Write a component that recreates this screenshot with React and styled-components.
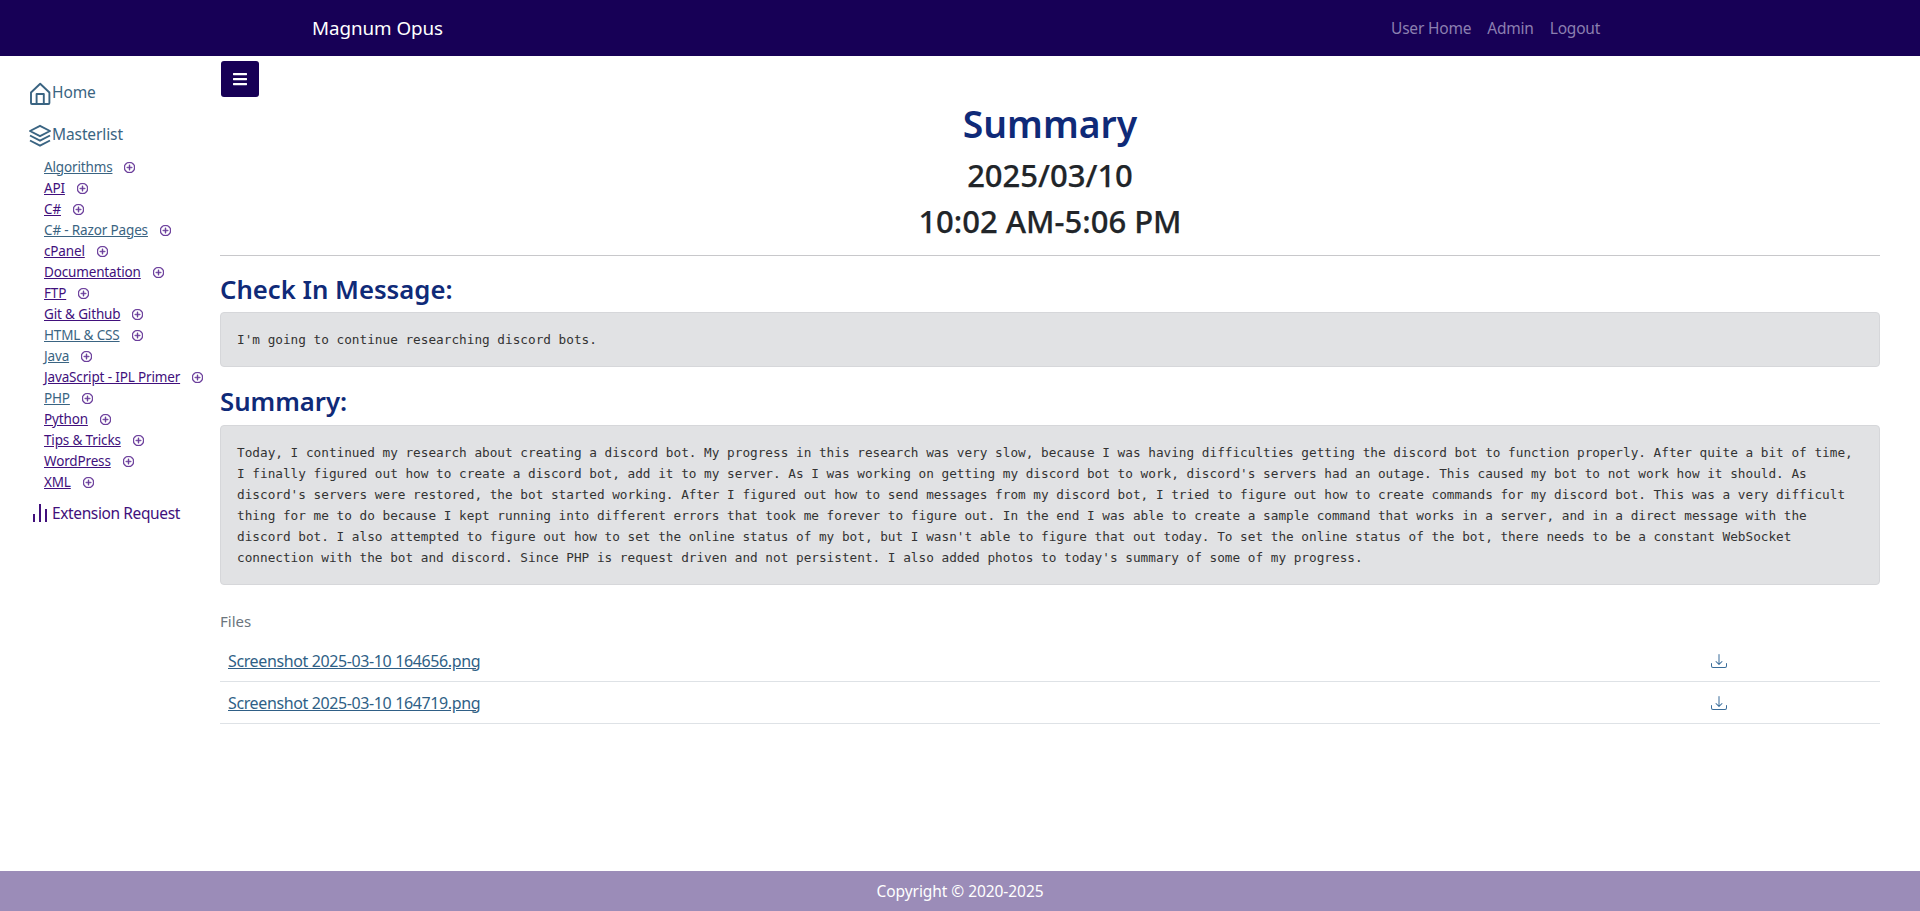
import React from "react";
import styled, { createGlobalStyle } from "styled-components";
import { BsPlusCircle, BsDownload } from "react-icons/bs";
import { FaBars } from "react-icons/fa";

const Global = createGlobalStyle`
  html, body { margin: 0; padding: 0; height: 100%; background: #fff; }
  body { font-family: "Noto Sans", "Open Sans", sans-serif; color: #212529; }
  #root { height: 100%; }
`;
const Page = styled.div`
  height: 911px; display: flex; flex-direction: column; overflow: hidden;
`;
const NavBar = styled.header`
  height: 56px; flex: none; background: #170056; display: flex; align-items: center;
  padding-left: 312px; box-sizing: border-box;
`;
const Brand = styled.div`
  color: #fff; font-size: 18.8px; width: 1079px; letter-spacing: -0.05px; line-height: 56px;
`;
const TopLinks = styled.nav`
  display: flex; gap: 16px;
`;
const TopLink = styled.a`
  color: #8b7fb0; font-size: 15.5px; letter-spacing: -0.2px;
`;
const Body = styled.div`
  flex: 1; display: flex; min-height: 0;
`;
const Side = styled.aside`
  width: 220px; flex: none; padding: 24px 0 0 29px; box-sizing: border-box;
`;
const MainItem = styled.div`
  display: flex; align-items: center; height: 24px; margin-bottom: ${p => p.$mb || 18}px;
  font-size: 15.5px; color: #3a6482; letter-spacing: -0.1px;
  svg { flex: none; width: 23px; height: 26px; }
`;
const SubList = styled.ul`
  list-style: none; margin: -6px 0 0; padding: 0 0 0 15px;
`;
const SubRow = styled.li`
  height: 21px; display: flex; align-items: center; white-space: nowrap;
`;
const SubLink = styled.a`
  font-size: 13.5px; text-decoration: underline; letter-spacing: -0.15px;
  color: ${p => (p.$seen ? "#3a6482" : "#41107c")};
`;
const PlusIcon = styled(BsPlusCircle)`
  width: 11px; height: 11px; margin-left: 12px; margin-top: 2px; color: #5b2a91; stroke: #5b2a91; stroke-width: 0.8px;
`;
const ExtItem = styled(MainItem)`
  color: #41107c; margin-top: 9px; padding-left: 4px; letter-spacing: -0.38px;
  svg { width: 14px; height: 18px; margin-right: 5px; }
`;
const Main = styled.main`
  flex: 1; padding: 5px 40px 0 0;
  min-width: 0;
`;
const Toggle = styled.button`
  width: 38px; height: 36px; margin-left: 1px; border: 0; border-radius: 3px; background: #170056; color: #fff;
  display: flex; align-items: center; justify-content: center; padding: 0;
  svg { width: 16px; height: 16px; }
`;
const Title = styled.h1`
  margin: 1px 0 2px; text-align: center; font-size: 37.3px; line-height: 52px; font-weight: 600; color: #0f2a78;
`;
const SubTitle = styled.h2`
  margin: 0; text-align: center; font-size: 31px; line-height: 46px; font-weight: 500; color: #212529;
  -webkit-text-stroke: 0.25px #212529;
`;
const Rule = styled.hr`
  margin: 11px 0 0; border: 0; border-top: 1px solid #c8c8cb;
`;
const Heading = styled.h3`
  margin: ${p => p.$top}px 0 ${p => p.$bottom}px; font-size: 25.7px; line-height: 34px; font-weight: 600; color: #0f2a78;
`;
const Block = styled.pre`
  margin: 0; padding: 16px; background: #e1e2e4; border: 1px solid #d6d7da; border-radius: 4px;
  font-family: "DejaVu Sans Mono", "Liberation Mono", monospace; font-size: 12.73px; line-height: 21px;
  color: #333; white-space: pre; overflow: hidden;
`;
const FilesLabel = styled.div`
  margin-top: 24px; margin-bottom: 7px; font-size: 15px; line-height: 24px; color: #6c757d;
`;
const FileRow = styled.div`
  height: 42px; border-bottom: 1px solid #dee2e6; display: flex; align-items: center; box-sizing: border-box;
  padding-left: 8px;
`;
const FileLink = styled.a`
  width: 1483px; flex: none; font-size: 16px; letter-spacing: -0.38px; color: #2f5f86; text-decoration: underline;
`;
const FileIcon = styled(BsDownload)`
  width: 16px; height: 16px; color: #3a6d9a;
`;
const Footer = styled.footer`
  height: 40px; flex: none; background: #9b8cb8; color: #fff; display: flex; align-items: center; justify-content: center;
  font-size: 15.5px; letter-spacing: -0.06px;
`;

const subs = [
  ["Algorithms", 1], ["API", 0], ["C#", 0], ["C# - Razor Pages", 1], ["cPanel", 0], ["Documentation", 0],
  ["FTP", 0], ["Git & Github", 0], ["HTML & CSS", 1], ["Java", 1], ["JavaScript - IPL Primer", 0],
  ["PHP", 1], ["Python", 0], ["Tips & Tricks", 0], ["WordPress", 0], ["XML", 0],
];

const summary = `Today, I continued my research about creating a discord bot. My progress in this research was very slow, because I was having difficulties getting the discord bot to function properly. After quite a bit of time,
I finally figured out how to create a discord bot, add it to my server. As I was working on getting my discord bot to work, discord's servers had an outage. This caused my bot to not work how it should. As
discord's servers were restored, the bot started working. After I figured out how to send messages from my discord bot, I tried to figure out how to create commands for my discord bot. This was a very difficult
thing for me to do because I kept running into different errors that took me forever to figure out. In the end I was able to create a sample command that works in a server, and in a direct message with the
discord bot. I also attempted to figure out how to set the online status of my bot, but I wasn't able to figure that out today. To set the online status of the bot, there needs to be a constant WebSocket
connection with the bot and discord. Since PHP is request driven and not persistent. I also added photos to today's summary of some of my progress.`;

const files = ["Screenshot 2025-03-10 164656.png", "Screenshot 2025-03-10 164719.png"];

const HomeIcon = () => (
  <svg viewBox="0 0 23 26" fill="none" stroke="#3a6482" strokeWidth="1.9" strokeLinejoin="round">
    <path d="M2 13.5 L11.2 4.8 L20.4 13.5 V24 a1 1 0 0 1-1 1 H3 a1 1 0 0 1-1-1 Z" />
    <path d="M7.6 25 V15 H14.8 V25" />
  </svg>
);
const StackIcon = () => (
  <svg viewBox="0 0 23 26" fill="none" stroke="#3a6482" strokeWidth="1.9" strokeLinejoin="round">
    <path d="M11 4.8 L21 10 L11 15.2 L1 10 Z" />
    <path d="M1 14.5 L11 19.7 L21 14.5" />
    <path d="M1 19.5 L11 24.7 L21 19.5" />
  </svg>
);

export default function App() {
  return (
    <Page>
      <Global />
      <NavBar>
        <Brand>Magnum Opus</Brand>
        <TopLinks>
          <TopLink>User Home</TopLink>
          <TopLink>Admin</TopLink>
          <TopLink>Logout</TopLink>
        </TopLinks>
      </NavBar>
      <Body>
        <Side>
          <MainItem><HomeIcon />Home</MainItem>
          <MainItem $mb={16}><StackIcon />Masterlist</MainItem>
          <SubList>
            {subs.map(([name, seen]) => (
              <SubRow key={name}>
                <SubLink $seen={!!seen}>{name}</SubLink>
                <PlusIcon />
              </SubRow>
            ))}
          </SubList>
          <ExtItem>
            <svg viewBox="0 0 14 18" fill="#41107c"><rect x="0" y="10" width="2" height="8" /><rect x="6" y="0" width="2" height="18" /><rect x="12" y="5" width="2" height="13" /></svg>
            Extension Request
          </ExtItem>
        </Side>
        <Main>
          <Toggle><FaBars /></Toggle>
          <Title>Summary</Title>
          <SubTitle>2025/03/10</SubTitle>
          <SubTitle>10:02 AM-5:06 PM</SubTitle>
          <Rule />
          <Heading $top={17} $bottom={5}>Check In Message:</Heading>
          <Block>I'm going to continue researching discord bots.</Block>
          <Heading $top={18} $bottom={6}>Summary:</Heading>
          <Block>{summary}</Block>
          <FilesLabel>Files</FilesLabel>
          {files.map(f => (
            <FileRow key={f}>
              <FileLink>{f}</FileLink>
              <FileIcon />
            </FileRow>
          ))}
        </Main>
      </Body>
      <Footer>Copyright © 2020-2025</Footer>
    </Page>
  );
}
